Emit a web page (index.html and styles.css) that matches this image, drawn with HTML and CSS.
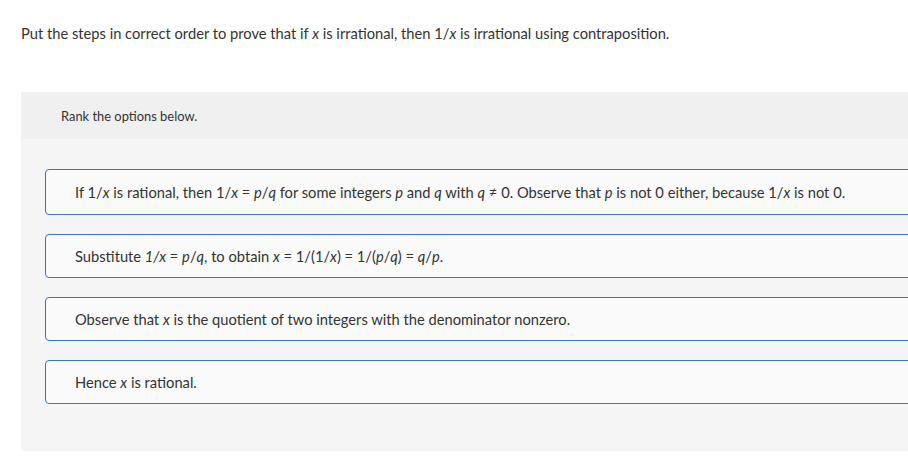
FILE: index.html
```html
<!DOCTYPE html>
<html>
<head>
<meta charset="utf-8">
<link rel="stylesheet" href="styles.css">
</head>
<body>
<p class="prompt">Put the steps in correct order to prove that if <i>x</i> is irrational, then 1/<i>x</i> is irrational using contraposition.</p>
<div class="panel">
  <div class="panel-head">Rank the options below.</div>
  <div class="list">
    <div class="card card-tall"><span>If 1/<i>x</i> is rational, then 1/<i>x</i> = <i>p</i>/<i>q</i> for some integers <i>p</i> and <i>q</i> with <i>q</i> ≠ 0. Observe that <i>p</i> is not 0 either, because 1/<i>x</i> is not 0.</span></div>
    <div class="card"><span>Substitute <i>1/x</i> = <i>p</i>/<i>q</i>, to obtain <i>x</i> = 1/(1/<i>x</i>) = 1/(<i>p</i>/<i>q</i>) = <i>q</i>/<i>p</i>.</span></div>
    <div class="card"><span>Observe that <i>x</i> is the quotient of two integers with the denominator nonzero.</span></div>
    <div class="card"><span>Hence <i>x</i> is rational.</span></div>
  </div>
</div>
</body>
</html>
```
FILE: styles.css
```css
html, body {
  margin: 0;
  overflow: hidden;
  background: #ffffff;
}
body {
  font-family: "Lato", "Open Sans", sans-serif;
  color: #333333;
}
.prompt {
  margin: 0;
  padding: 23px 0 0 21px;
  font-size: 14.7px;
  line-height: 20px;
}
.panel {
  margin: 49px 0 0 21px;
  width: 920px;
  background: #f5f5f5;
}
.panel-head {
  height: 47px;
  background: #f0f0f0;
  padding-left: 40px;
  display: flex;
  align-items: center;
  font-size: 12.9px;
}
.list {
  display: flex;
  flex-direction: column;
  gap: 19px;
  padding: 30px 0 47px 24px;
}
.card {
  box-sizing: border-box;
  height: 44px;
  display: flex;
  align-items: center;
  border: 1px solid #3a77c0;
  border-radius: 4px;
  background: #fafafa;
  padding: 0 29px;
  font-size: 14.7px;
  line-height: 20px;
}
.card-tall {
  height: 46px;
}
```
